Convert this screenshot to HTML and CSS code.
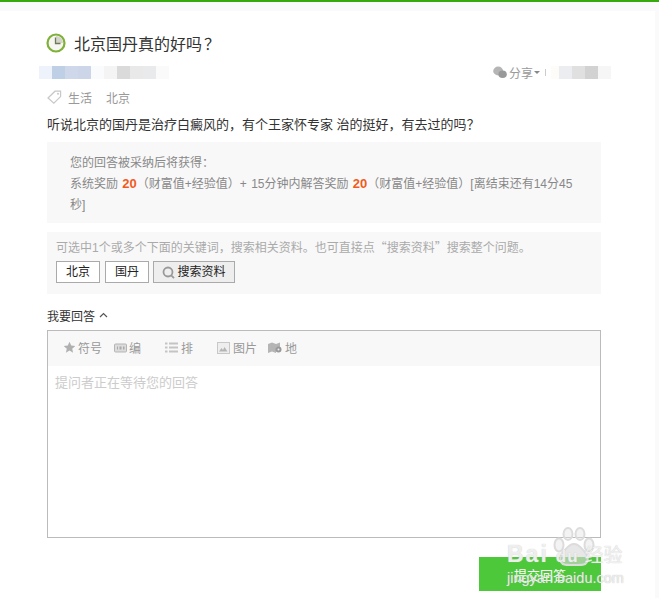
FILE: index.html
```html
<!DOCTYPE html>
<html lang="zh">
<head>
<meta charset="utf-8">
<title>北京国丹真的好吗？</title>
<link rel="stylesheet" href="styles.css">
</head>
<body>
<div class="topbar"></div>
<div class="strip"></div>
<main class="page">
  <h1 class="title">
    <svg class="clock" width="20" height="20" viewBox="0 0 20 20"><circle cx="10" cy="10" r="8.500" fill="#f6f6f2" stroke="#7fb037" stroke-width="2.200"/><path d="M10 3a7 7 0 0 1 7 7h-7Z" fill="#d4d4cc"/><path d="M9.500 4.500v6h5" fill="none" stroke="#6f7a55" stroke-width="1.300"/></svg>
    <span>北京国丹真的好吗<span class="fw qm">？</span></span>
  </h1>
  <div class="meta">
    <div class="blur">
      <i class="c1"></i><i class="c2"></i><i class="c3"></i><i class="c4"></i><i class="c5"></i><i class="c6"></i><i class="c7"></i><i class="c8"></i><i class="c9"></i><i class="c10"></i>
    </div>
    <div class="share">
      <svg width="14" height="13" viewBox="0 0 14 13"><ellipse cx="5.200" cy="5" rx="5" ry="4.400" fill="#b5b5b5"/><ellipse cx="9.600" cy="8.200" rx="4.200" ry="3.800" fill="#999"/></svg>
      <span>分享</span><b class="caret"></b><span class="sep"></span>
      <div class="blur">
        <i class="d1"></i><i class="d2"></i><i class="d3"></i><i class="d4"></i><i class="d5"></i>
      </div>
    </div>
  </div>
  <div class="tags">
    <svg width="15" height="14" viewBox="0 0 15 14"><path d="M1 8 8 1.200h5.600V6.600L6.800 13.200Z" fill="none" stroke="#c8c8c8" stroke-width="1.200"/><circle cx="11" cy="3.800" r="1" fill="#c8c8c8"/></svg>
    <span>生活</span><span>北京</span>
  </div>
  <p class="question">听说北京的国丹是治疗白癜风的，有个王家怀专家 治的挺好，有去过的吗<span class="fw">？</span></p>
  <section class="reward">
    <p>您的回答被采纳后将获得：</p>
    <p>系统奖励 <em>20</em>（财富值+经验值）+ 15分钟内解答奖励 <em>20</em>（财富值+经验值）[离结束还有14分45秒]</p>
  </section>
  <section class="search">
    <p>可选中1个或多个下面的关键词，搜索相关资料。也可直接点<span class="fw">“</span>搜索资料<span class="fw">”</span>搜索整个问题。</p>
    <div class="buttons">
      <button class="kw">北京</button>
      <button class="kw">国丹</button>
      <button class="kw find">
        <svg width="13" height="13" viewBox="0 0 13 13"><circle cx="6" cy="6" r="4.500" fill="none" stroke="#999" stroke-width="1.800"/><path d="m9 9.200 3 3" stroke="#999" stroke-width="1.800"/></svg>
        搜索资料
      </button>
    </div>
  </section>
  <div class="answer-label">我要回答
    <svg width="9" height="6" viewBox="0 0 9 6"><path d="m1 5 3.500-3.500L8 5" fill="none" stroke="#555" stroke-width="1.200"/></svg>
  </div>
  <div class="editor">
    <div class="toolbar">
      <span class="tool t1"><svg width="13" height="13" viewBox="0 0 13 13"><path d="m6.500.8 1.700 3.800 4.100.4-3.100 2.700.9 4-3.600-2.100-3.600 2.100.9-4L.7 5l4.100-.4Z" fill="#b0b0b0"/></svg>符号</span>
      <span class="tool t2"><svg width="13" height="10" viewBox="0 0 13 10"><rect x=".5" y="1" width="12" height="8" rx="1" fill="#dcdcdc" stroke="#b5b5b5"/><path d="M3 3.500h1v3H3zM5.500 3.500h2v3h-2zM9 3.500h1.500v3H9z" fill="#aaa"/></svg>编</span>
      <span class="tool t3"><svg width="13" height="11" viewBox="0 0 13 11"><path d="M0 1.500h2.500M4 1.500h9M0 5.500h2.500M4 5.500h9M0 9.500h2.500M4 9.500h9" stroke="#c4c4c4" stroke-width="2"/></svg>排</span>
      <span class="tool t4"><svg width="13" height="12" viewBox="0 0 13 12"><rect x=".5" y=".5" width="12" height="11" fill="#eee" stroke="#c8c8c8"/><path d="m2 9.500 2.500-3.500 1.500 2 1.500-3 3 4.500Z" fill="#b5b5b5"/></svg>图片</span>
      <span class="tool t5"><svg width="14" height="12" viewBox="0 0 14 12"><path d="M0 2 4 .5 8 2 12 .5V5H8v6L4 9.500 0 11Z" fill="#b5b5b5"/><circle cx="10.500" cy="7.500" r="3" fill="#999"/><circle cx="10.500" cy="7.500" r="1" fill="#eee"/></svg>地</span>
    </div>
    <div class="placeholder">提问者正在等待您的回答</div>
  </div>
  <div class="submit-row"><button class="submit">提交回答</button></div>
</main>
<div class="watermark">
  <svg class="paw" width="44" height="42" viewBox="0 0 44 42"><g fill="rgba(228,228,228,.45)" stroke="#dcdcdc" stroke-width="2"><ellipse cx="7" cy="18" rx="4.500" ry="6.500"/><ellipse cx="16" cy="7" rx="4.500" ry="6"/><ellipse cx="28" cy="7" rx="4.500" ry="6"/><ellipse cx="37" cy="18" rx="4.500" ry="6.500"/><path d="M22 17c-5 0-7 4-10 7-4 4-5 7-3 11 2 4 8 3 13 3s11 1 13-3c2-4 1-7-3-11-3-3-5-7-10-7Z" fill="rgba(215,215,215,.6)"/></g></svg>
  <div class="wm-logo"><span class="wm-bai">Bai</span><span class="wm-du">du</span><span class="wm-cn">经验</span></div>
  <div class="wm-url">jingyan.baidu.com</div>
</div>
</body>
</html>
```
FILE: styles.css
```css
* { box-sizing: border-box; }
html, body { margin: 0; padding: 0; }
body {
  width: 659px;
  height: 598px;
  overflow: hidden;
  position: relative;
  background: #fafafa;
  font-family: "Liberation Sans", "Noto Sans CJK SC", sans-serif;
  font-size: 12px;
  color: #333;
}
p { margin: 0; }
.fw { font-family: "Noto Sans CJK TC", sans-serif; }
.qm { margin-left: 2px; }
.topbar { height: 2px; background: #38a80f; }
.strip { height: 9px; background: #fafafa; }
.page {
  width: 655px;
  height: 587px;
  background: #fff;
  padding: 21px 54px 0 47px;
}
.title {
  display: flex;
  align-items: center;
  gap: 8px;
  height: 22px;
  margin: 0 0 0 -1px;
  font-size: 16px;
  font-weight: 400;
  color: #333;
}
.clock { flex: none; }
.meta {
  display: flex;
  justify-content: space-between;
  align-items: center;
  height: 16px;
  margin: 10px -10px 0 -8px;
}
.blur { display: flex; height: 13px; }
.blur i { display: block; width: 13px; height: 13px; }
.c1 { background: #eef2fa; }
.c2 { background: #bfcfe6; }
.c3 { background: #cfd8ea; }
.c4 { background: #cdd5e8; }
.c5 { background: #fafbfd; }
.c6 { background: #f4f4f4; }
.c7 { background: #dadada; }
.c8 { background: #e9e9e9; }
.c9 { background: #e9eaec; }
.c10 { background: #fafafa; }
.share {
  display: flex;
  align-items: center;
  color: #999;
}
.share svg { margin-right: 2px; }
.caret {
  width: 0;
  height: 0;
  margin: 1px 0 0 1px;
  border: 3px solid transparent;
  border-top: 3px solid #888;
  border-bottom: 0;
}
.sep {
  width: 1px;
  height: 7px;
  margin: 0 5px;
  background: #ccc;
}
.blur .d1 { background: #fdfcf9; width: 8px; }
.d2 { background: #ecedf0; }
.d3 { background: #e0e0e0; }
.d4 { background: #d2d2d2; }
.d5 { background: #f6f6f6; }
.tags {
  display: flex;
  align-items: center;
  height: 18px;
  margin-top: 8px;
  color: #999;
}
.tags svg { margin-right: 6px; }
.tags span { margin-right: 14px; }
.question {
  margin-top: 8px;
  font-size: 13px;
  line-height: 20px;
  color: #333;
}
.reward {
  margin-top: 7px;
  height: 81px;
  padding: 11px 27px 0 23px;
  background: #f8f8f8;
  color: #888;
  line-height: 21px;
  word-spacing: 1px;
}
.reward em {
  font-style: normal;
  font-weight: 700;
  font-size: 13px;
  line-height: 1;
  color: #f25a1c;
}
.search {
  margin-top: 9px;
  height: 62px;
  padding: 5px 9px 0;
  background: #f8f8f8;
  color: #aaa;
  line-height: 20px;
}
.buttons { display: flex; gap: 5px; margin-top: 3px; }
.kw {
  display: flex;
  align-items: center;
  justify-content: center;
  gap: 2px;
  width: 44px;
  height: 22px;
  padding: 0;
  border: 1px solid #aaa;
  background: #fff;
  font: inherit;
  color: #222;
}
.kw.find { width: 82px; margin-left: -1px; background: #eee; }
.answer-label {
  display: flex;
  align-items: center;
  gap: 4px;
  height: 18px;
  margin-top: 12px;
  color: #333;
}
.editor {
  height: 208px;
  margin-top: 6px;
  border: 1px solid #bbb;
  background: #fff;
}
.toolbar {
  display: flex;
  align-items: center;
  height: 35px;
  padding: 0 0 2px 15px;
  background: #f8f8f8;
  color: #999;
}
.tool { display: flex; align-items: center; gap: 2px; }
.t2 { margin-left: 12px; }
.t3 { margin-left: 24px; gap: 3px; }
.t4 { margin-left: 24px; gap: 3px; }
.t5 { margin-left: 11px; gap: 3px; }
.placeholder {
  padding: 7px 7px;
  font-size: 13px;
  line-height: 20px;
  color: #ccc;
}
.submit-row { display: flex; justify-content: flex-end; margin-top: 19px; }
.submit {
  width: 122px;
  height: 34px;
  padding: 0;
  border: 0;
  background: #4dc83a;
  font: inherit;
  font-size: 13px;
  color: #fff;
}
.watermark {
  position: absolute;
  left: 505px;
  top: 526px;
  width: 150px;
  height: 62px;
  pointer-events: none;
}
.paw { position: absolute; left: 47px; top: 1px; }
.wm-logo {
  position: absolute;
  left: 2px;
  top: 14px;
  display: flex;
  align-items: baseline;
  font-weight: 700;
  font-size: 23px;
  line-height: 28px;
  color: rgba(255, 255, 255, .75);
  text-shadow: 0 0 1px #bbb;
}
.wm-bai { letter-spacing: 2px; }
.wm-du { margin-left: 7px; font-size: 17px; letter-spacing: 1px; }
.wm-cn {
  margin-left: 6px;
  font-family: "Noto Sans CJK SC", sans-serif;
  font-weight: 400;
  font-size: 19px;
}
.wm-url {
  position: absolute;
  left: 2px;
  top: 43px;
  font-size: 14.500px;
  line-height: 18px;
  color: rgba(255, 255, 255, .75);
  text-shadow: 0 0 1px #aaa;
}
```
